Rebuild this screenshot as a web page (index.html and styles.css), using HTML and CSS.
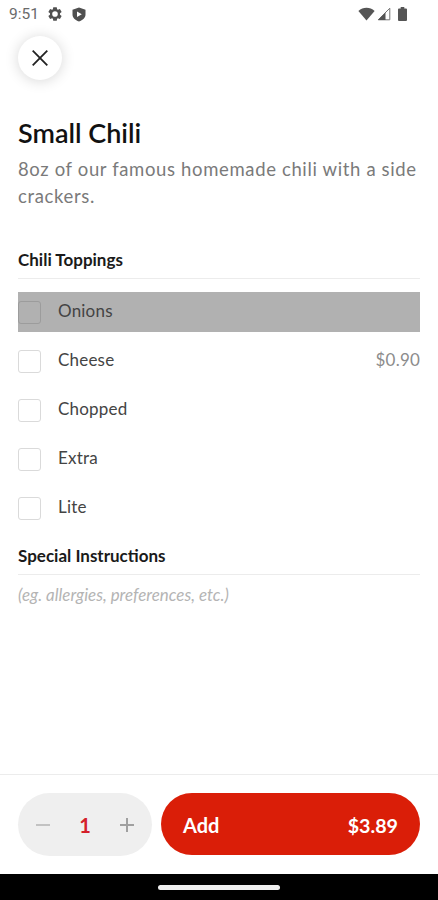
FILE: index.html
```html
<!DOCTYPE html>
<html lang="en">
<head>
<meta charset="utf-8">
<meta name="viewport" content="width=device-width, initial-scale=1">
<title>Small Chili</title>
<link rel="stylesheet" href="styles.css">
</head>
<body>
<div class="screen">
  <header class="status">
    <span class="time">9:51</span>
    <svg class="gear" width="14" height="14" viewBox="0 0 24 24"><path fill="#505050" fill-rule="evenodd" d="M9 .5h6l.6 3.500 1.500.900 3.300-1.300 3 5.100-2.800 2.200v2.200l2.800 2.200-3 5.100-3.300-1.300-1.500.9-.6 3.500H9l-.6-3.500-1.500-.9-3.300 1.300-3-5.100 2.800-2.200v-2.200L.6 8.700l3-5.100 3.300 1.300 1.500-.9zM12 7.200a4.800 4.800 0 1 0 0 9.600 4.800 4.800 0 0 0 0-9.600z"/></svg>
    <svg class="shield" width="14" height="15" viewBox="0 0 14 15"><path fill="#505050" fill-rule="evenodd" d="M7 .5l6.500 2.300v4.700c0 3.200-2.600 5.600-6.500 7-3.900-1.400-6.500-3.800-6.500-7V2.800zM5 4.500v5.600L9.800 7.300z"/></svg>
    <span class="spacer"></span>
    <svg width="17" height="14" viewBox="0 0 17 14"><path fill="#555" d="M.4 4C5-.2 12-.2 16.600 4L8.500 13.500z"/></svg>
    <svg class="signal" width="14" height="14" viewBox="0 0 14 14"><path fill="none" stroke="#777" d="M1.200 12.800h11.600V1.200z"/><path fill="#555" d="M1 13h7.500V5.500z"/></svg>
    <svg class="battery" width="9" height="14" viewBox="0 0 9 14"><path fill="#555" d="M2.700 0h3.600v1.500H8q1 0 1 1V13q0 1-1 1H1q-1 0-1-1V2.500q0-1 1-1h1.700z"/></svg>
  </header>

  <button class="close" aria-label="Close"><svg width="16" height="16" viewBox="0 0 16 16"><path stroke="#222" stroke-width="1.800" d="M.7.7l14.600 14.600M15.300.7.7 15.300"/></svg></button>

  <main class="content">
    <h1>Small Chili</h1>
    <p class="description">8oz of our famous homemade chili with a side crackers.</p>

    <h2 class="toppings-title">Chili Toppings</h2>
    <ul class="toppings">
      <li class="pressed"><span class="box"></span><span class="name">Onions</span></li>
      <li><span class="box"></span><span class="name">Cheese</span><span class="price">$0.90</span></li>
      <li><span class="box"></span><span class="name">Chopped</span></li>
      <li><span class="box"></span><span class="name">Extra</span></li>
      <li><span class="box"></span><span class="name">Lite</span></li>
    </ul>

    <h2 class="special-title">Special Instructions</h2>
    <p class="hint">(eg. allergies, preferences, etc.)</p>
  </main>

  <footer class="order">
    <div class="stepper">
      <svg width="14" height="14" viewBox="0 0 14 14"><path stroke="#c2c2c2" stroke-width="2" d="M0 7h14"/></svg>
      <span class="count">1</span>
      <svg width="14" height="14" viewBox="0 0 14 14"><path stroke="#a0a0a0" stroke-width="2" d="M0 7h14M7 0v14"/></svg>
    </div>
    <button class="add"><span>Add</span><span class="total">$3.89</span></button>
  </footer>
  <div class="navbar"><span class="handle"></span></div>
</div>
</body>
</html>
```
FILE: styles.css
```css
* { box-sizing: border-box; }
body { margin: 0; background: #fff; font-family: Lato, sans-serif; }
h1, h2, p, ul { margin: 0; padding: 0; }
button { border: 0; padding: 0; font: inherit; }
svg { display: block; flex: none; }
.screen { display: flex; flex-direction: column; width: 438px; height: 900px; overflow: hidden; }

.status { display: flex; align-items: center; height: 28px; padding: 0 31px 0 9px; }
.time { width: 30px; font: 15.5px/28px Roboto, sans-serif; color: #6a6a6a; white-space: nowrap; }
.gear { margin-left: 9px; }
.shield { margin-left: 10px; }
.spacer { flex: 1; }
.signal { margin-left: 2px; }
.battery { margin-left: 7px; }

.close { display: flex; align-items: center; justify-content: center; flex: none; width: 44px; height: 44px; margin: 8px 0 0 18px; border-radius: 50%; background: #fff; box-shadow: 0 1px 14px rgba(0, 0, 0, .16); }

.content { flex: 1; padding: 0 18px; }
h1 { margin-top: 35px; font-size: 27px; line-height: 36px; font-weight: 600; color: #111; white-space: nowrap; }
.description { margin: 5px -4px 0 0; font-size: 18.500px; line-height: 27px; letter-spacing: .64px; color: #7a7a7a; }
h2 { font-size: 17px; line-height: 24px; font-weight: 700; color: #1a1a1a; border-bottom: 1px solid #ececec; }
.toppings-title { height: 31px; margin-top: 38px; }
.toppings { display: flex; flex-direction: column; gap: 9px; margin-top: 13px; list-style: none; }
.toppings li { display: flex; align-items: center; height: 40px; font-size: 17px; line-height: 20px; letter-spacing: .2px; color: #444; }
.toppings .pressed { background: #b1b1b1; }
.box { width: 23px; height: 23px; border: 1px solid #dadada; border-radius: 3px; }
.pressed .box { border-color: #9c9c9c; }
.name { margin-left: 17px; padding-bottom: 2px; }
.price { margin-left: auto; padding-bottom: 2px; color: #8c8c8c; }
.special-title { height: 31px; margin-top: 16px; }
.hint { margin-top: 8px; font-size: 16.900px; line-height: 24px; font-style: italic; color: #b4b4b4; }

.order { display: flex; justify-content: space-between; height: 100px; padding: 18px 18px 0; border-top: 1px solid #ececec; }
.stepper { display: flex; align-items: center; justify-content: space-between; width: 134px; height: 63px; padding: 0 18px; border-radius: 32px; background: #efefef; }
.count { font-size: 20px; font-weight: 700; color: #d4202a; }
.add { display: flex; align-items: center; justify-content: space-between; width: 259px; height: 62px; padding: 2px 22px 0; border-radius: 31px; background: #da1e08; color: #fff; font-size: 20px; font-weight: 700; }
.total { font-size: 19.700px; }
.navbar { display: flex; align-items: center; justify-content: center; height: 26px; background: #000; }
.handle { width: 122px; height: 5px; border-radius: 3px; background: #eee; }
```
